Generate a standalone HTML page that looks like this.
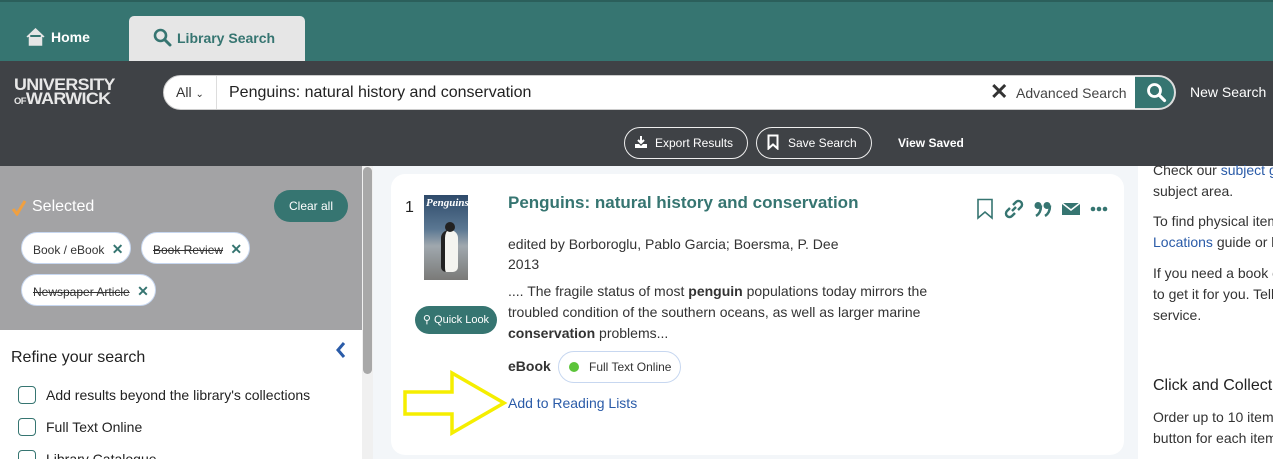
<!DOCTYPE html>
<html><head><meta charset="utf-8"><style>
*{box-sizing:border-box;margin:0;padding:0}
html,body{width:1273px;height:459px;overflow:hidden}
body{font-family:"Liberation Sans",Arial,sans-serif;background:#f3f6f9;position:relative;color:#222}
.abs{position:absolute}
.teal{background:#367571}
</style></head><body>
<div class="abs teal" style="left:0;top:0;width:1273px;height:61px;border-top:2px solid #2b5f5b"></div>
<div class="abs" style="left:26px;top:28px;color:#fff;font-weight:bold;font-size:14px;display:flex;align-items:center;gap:6px">
<svg width="19" height="18" viewBox="0 0 19 18"><path d="M1 9 L9.5 1 L18 9 M3.5 7 V17 H15.5 V7" fill="#e6e6e6" stroke="#e6e6e6" stroke-width="1.5"/></svg>Home</div>
<div class="abs" style="left:129px;top:16px;width:176px;height:45px;background:#e6e6e6;border-radius:5px 5px 0 0"></div>
<div class="abs" style="left:153px;top:28px;color:#367571;font-weight:bold;font-size:14px;display:flex;align-items:center;gap:5px">
<svg width="19" height="19" viewBox="0 0 19 19"><circle cx="7.5" cy="7.5" r="5.5" fill="none" stroke="#367571" stroke-width="2.6"/><path d="M11.5 11.5 L17 17" stroke="#367571" stroke-width="3" stroke-linecap="round"/></svg>Library Search</div>
<div class="abs" style="left:0;top:61px;width:1273px;height:105px;background:#3f4246"></div>
<div class="abs" style="left:14px;top:78px;color:#e8e8e8;font-weight:bold;font-size:17px;line-height:14px;letter-spacing:-0.6px;transform:scaleX(1.05);transform-origin:left">UNIVERSITY<br><span style="font-size:9px">OF</span>WARWICK</div>
<div class="abs" style="left:163px;top:75px;width:975px;height:35px;background:#fff;border-radius:18px 0 0 18px;border:1px solid #ccc"></div>
<div class="abs" style="left:176px;top:84px;font-size:14px;color:#333">All <span style="font-size:10px">&#8964;</span></div>
<div class="abs" style="left:216px;top:76px;width:1px;height:33px;background:#ddd"></div>
<div class="abs" style="left:229px;top:84px;font-size:16px;color:#222">Penguins: natural history and conservation</div>
<div class="abs" style="left:990px;top:82px;font-size:22px;font-weight:bold;color:#333;line-height:20px">✕</div>
<div class="abs" style="left:1016px;top:85px;font-size:14px;color:#444">Advanced Search</div>
<div class="abs teal" style="left:1135px;top:75px;width:41px;height:35px;border-radius:0 18px 18px 0;border:2px solid #ddd;border-left:none"></div>
<svg class="abs" style="left:1146px;top:82px" width="21" height="21" viewBox="0 0 21 21"><circle cx="8.5" cy="8.5" r="6" fill="none" stroke="#fff" stroke-width="2.8"/><path d="M13 13 L18.5 18.5" stroke="#fff" stroke-width="3.2" stroke-linecap="round"/></svg>
<div class="abs" style="left:1190px;top:84px;font-size:14px;color:#fff">New Search</div>
<div class="abs" style="left:624px;top:127px;width:124px;height:32px;border:1.5px solid #eee;border-radius:16px;color:#fff;font-size:12px;padding:8px 0 0 30px">Export Results</div>
<svg class="abs" style="left:634px;top:135px" width="14" height="14" viewBox="0 0 14 14"><path d="M7 1V8 M4 5 L7 8 L10 5" stroke="#fff" stroke-width="2" fill="none"/><path d="M1 9 V13 H13 V9 H9 L7 11 L5 9Z" fill="#fff"/></svg>
<div class="abs" style="left:756px;top:127px;width:116px;height:32px;border:1.5px solid #eee;border-radius:16px;color:#fff;font-size:12px;padding:8px 0 0 31px">Save Search</div>
<svg class="abs" style="left:767px;top:134px" width="12" height="16" viewBox="0 0 12 16"><path d="M1.5 1.5 H10.5 V14.5 L6 10.5 L1.5 14.5Z" stroke="#fff" stroke-width="2" fill="none"/></svg>
<div class="abs" style="left:898px;top:136px;color:#fff;font-size:12px;font-weight:bold">View Saved</div>
<!-- left panel -->
<div class="abs" style="left:0;top:166px;width:362px;height:293px;background:#fff"></div>
<div class="abs" style="left:0;top:166px;width:362px;height:164px;background:#a3a3a5"></div>
<div class="abs" style="left:362px;top:166px;width:11px;height:293px;background:#f0f0f0"></div>
<div class="abs" style="left:363px;top:167px;width:9px;height:207px;background:#a8a8a8;border-radius:5px"></div>
<svg class="abs" style="left:11px;top:199px" width="16" height="17" viewBox="0 0 16 17"><path d="M2 10 L6 15 L14 2" stroke="#f0a040" stroke-width="3" fill="none"/></svg>
<div class="abs" style="left:32px;top:198px;font-size:16px;color:#fff">Selected</div>
<div class="abs teal" style="left:274px;top:190px;width:74px;height:32px;border-radius:16px;color:#fff;font-size:12px;text-align:center;line-height:32px">Clear all</div>
<div class="abs" style="left:21px;top:232px;width:110px;height:32px;background:#fff;border:1px solid #c7d7f0;border-radius:16px;font-size:12px;padding:8px 0 0 11px;color:#333">Book / eBook <b style="color:#367571;margin-left:4px;font-size:14px">✕</b></div>
<div class="abs" style="left:141px;top:232px;width:109px;height:32px;background:#fff;border:1px solid #c7d7f0;border-radius:16px;font-size:12px;padding:8px 0 0 11px;color:#333"><s>Book Review</s> <b style="color:#367571;margin-left:4px;font-size:14px">✕</b></div>
<div class="abs" style="left:21px;top:274px;width:135px;height:32px;background:#fff;border:1px solid #c7d7f0;border-radius:16px;font-size:12px;padding:8px 0 0 11px;color:#333"><s>Newspaper Article</s> <b style="color:#367571;margin-left:4px;font-size:14px">✕</b></div>
<div class="abs" style="left:11px;top:349px;font-size:16px;color:#222">Refine your search</div>
<svg class="abs" style="left:335px;top:341px" width="12" height="18" viewBox="0 0 12 18"><path d="M9 2 L3 9 L9 16" stroke="#2a5ba8" stroke-width="3" fill="none"/></svg>
<div class="abs" style="left:18px;top:386px;width:18px;height:18px;border:1.5px solid #367571;border-radius:4px"></div>
<div class="abs" style="left:46px;top:387px;font-size:14px">Add results beyond the library's collections</div>
<div class="abs" style="left:18px;top:418px;width:18px;height:18px;border:1.5px solid #367571;border-radius:4px"></div>
<div class="abs" style="left:46px;top:419px;font-size:14px">Full Text Online</div>
<div class="abs" style="left:18px;top:450px;width:18px;height:18px;border:1.5px solid #367571;border-radius:4px"></div>
<div class="abs" style="left:46px;top:451px;font-size:14px">Library Catalogue</div>
<!-- card -->
<div class="abs" style="left:391px;top:174px;width:733px;height:281px;background:#fff;border-radius:14px"></div>
<div class="abs" style="left:405px;top:199px;font-size:16px">1</div>
<div class="abs" style="left:424px;top:195px;width:44px;height:85px;background:linear-gradient(#2e4a6a 0,#5a7792 40%,#a0a8ae 60%,#7a7a78 100%)"></div>
<div class="abs" style="left:426px;top:197px;font-size:11px;color:#fff;font-family:'Liberation Serif';font-weight:bold;font-style:italic">Penguins</div>
<div class="abs" style="left:441px;top:230px;width:17px;height:42px;background:#f4f4f0;border-radius:8px 8px 5px 5px;border-left:4px solid #222"></div>
<div class="abs" style="left:445px;top:222px;width:10px;height:10px;background:#222;border-radius:5px"></div>
<div class="abs teal" style="left:415px;top:306px;width:82px;height:28px;border-radius:14px;color:#fff;font-size:11px;text-align:center;line-height:28px">⚲ Quick Look</div>
<div class="abs" style="left:508px;top:193px;font-size:17px;font-weight:bold;color:#367571">Penguins: natural history and conservation</div>
<div class="abs" style="left:976px;top:198px;display:flex;gap:10px;align-items:center">
<svg width="18" height="22" viewBox="0 0 18 22"><path d="M2 1.5 H16 V20 L9 14 L2 20Z" stroke="#367571" stroke-width="1.6" fill="none"/></svg>
<svg width="20" height="20" viewBox="0 0 20 20"><path d="M8 12 L12 8 M9 6 L12 3 A3 3 0 0 1 17 8 L14 11 M11 14 L8 17 A3 3 0 0 1 3 12 L6 9" stroke="#367571" stroke-width="2.4" fill="none"/></svg>
<svg width="18" height="16" viewBox="0 0 18 16"><circle cx="4" cy="4.5" r="3.5" fill="#367571"/><path d="M7 4.5 Q7 12 2 15" stroke="#367571" stroke-width="2.5" fill="none"/><circle cx="13" cy="4.5" r="3.5" fill="#367571"/><path d="M16 4.5 Q16 12 11 15" stroke="#367571" stroke-width="2.5" fill="none"/></svg>
<svg width="18" height="14" viewBox="0 0 18 14"><path d="M0 1 H18 V13 H0Z" fill="#367571"/><path d="M0 1 L9 8 L18 1" stroke="#fff" stroke-width="1.5" fill="none"/></svg>
<svg width="18" height="6" viewBox="0 0 18 6"><circle cx="3" cy="3" r="2.3" fill="#367571"/><circle cx="9" cy="3" r="2.3" fill="#367571"/><circle cx="15" cy="3" r="2.3" fill="#367571"/></svg></div>
<div class="abs" style="left:508px;top:234px;font-size:14px;line-height:20px;color:#333">edited by Borboroglu, Pablo Garcia; Boersma, P. Dee<br>2013</div>
<div class="abs" style="left:508px;top:281px;font-size:14px;line-height:21px;color:#333">.... The fragile status of most <b>penguin</b> populations today mirrors the<br>troubled condition of the southern oceans, as well as larger marine<br><b>conservation</b> problems...</div>
<div class="abs" style="left:508px;top:358px;font-size:14px;font-weight:bold;color:#333">eBook</div>
<div class="abs" style="left:558px;top:351px;width:123px;height:32px;border:1px solid #c7d7f0;border-radius:16px;font-size:12px;padding:8px 0 0 30px;color:#333">Full Text Online</div>
<div class="abs" style="left:569px;top:362px;width:10px;height:10px;border-radius:5px;background:#5cc43a"></div>
<div class="abs" style="left:508px;top:395px;font-size:14px;color:#2a5ba8">Add to Reading Lists</div>
<svg class="abs" style="left:400px;top:370px" width="110" height="66" viewBox="0 0 110 66"><path d="M5 22 H52 V3 L104 33 L52 63 V44 H5Z" stroke="#f5ee00" stroke-width="3.5" fill="none" stroke-linejoin="miter"/></svg>
<!-- right -->
<div class="abs" style="left:1138px;top:166px;width:135px;height:293px;background:#fff"></div>
<div class="abs" style="left:1153px;top:160px;font-size:14px;line-height:21px;color:#333;white-space:nowrap">Check our <span style="color:#2a5ba8">subject guides</span><br>subject area.</div>
<div class="abs" style="left:1153px;top:211px;font-size:14px;line-height:21px;color:#333;white-space:nowrap">To find physical items<br><span style="color:#2a5ba8">Locations</span> guide or l</div>
<div class="abs" style="left:1153px;top:263px;font-size:14px;line-height:21px;color:#333;white-space:nowrap">If you need a book o<br>to get it for you. Tell<br>service.</div>
<div class="abs" style="left:1153px;top:377px;font-size:16px;color:#222;white-space:nowrap">Click and Collect</div>
<div class="abs" style="left:1153px;top:407px;font-size:14px;line-height:21px;color:#333;white-space:nowrap">Order up to 10 items<br>button for each item</div>
</body></html>
